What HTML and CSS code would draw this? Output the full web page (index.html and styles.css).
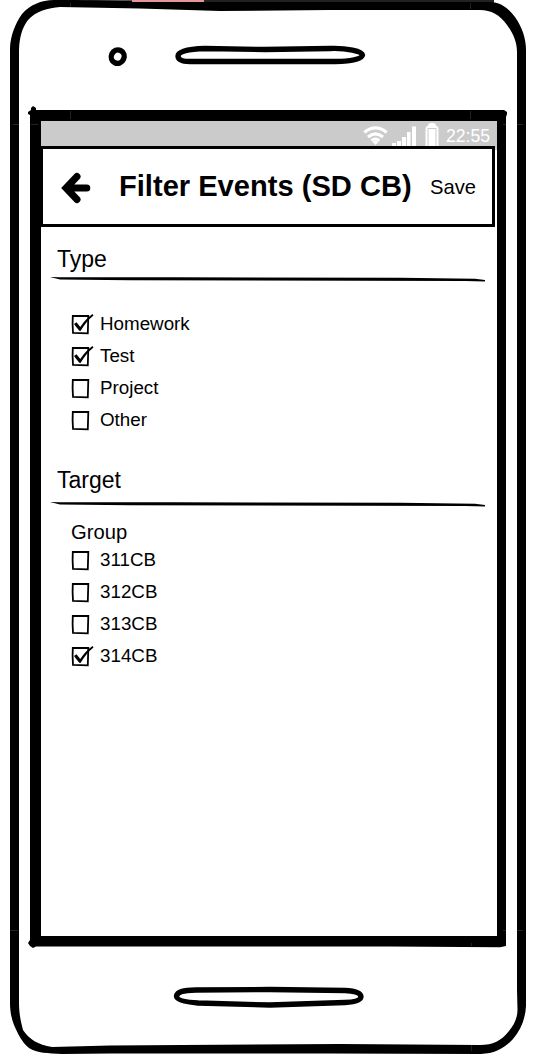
FILE: index.html
```html
<!DOCTYPE html>
<html lang="en">
<head>
<meta charset="utf-8">
<title>Filter Events</title>
<link rel="stylesheet" href="styles.css">
</head>
<body>
<div class="phone">
  <svg class="phone-frame" viewBox="0 0 535 1063" aria-hidden="true">
    <path fill="#222" d="M204 0H494V3H204z"/>
    <path fill="#555" d="M75 0H132V2H75z"/>
    <path fill-rule="evenodd" d="M10 48C10.500 36 15 24 22 14C30 5 41 0 54 0H75C120 1 180 2 220 2H490C501 2 509 9 515 17C522 27 526 38 526 50V1006C525.500 1018 521 1030 513 1039C505 1048 495 1053.700 481 1054L330 1053.500L110 1053.500L62 1054C48 1053 37 1053.500 29 1048C22 1043 17 1032 14 1025C11 1017 10 1010 10 1003zM19 50V1003C19 1014 21 1022 23 1030C29 1039 38 1045 52 1047L110 1045.500L340 1044L480 1045C493 1045 501 1041 509 1031C514 1025 517.500 1018 517.500 1010L517 990V52C517 42 513 33 507 25C500 15 491 10 480 10H330L220 11L140 8.500L60 7C48 8 36 11 28 20C22 28 19.500 37 19 50z"/>
    <path fill="#e5969a" d="M132 0H204V2H132z"/>
    <path fill-rule="evenodd" d="M30 115L28 114V112L31 110V108L33 106L36 108V110H504L507 112V114L506 117V946L500 947.300L390 946.500H36L33 948L30 946L28 943L30 940zM41 121V936H497V121z"/>
    <ellipse cx="117.700" cy="56.600" rx="6.400" ry="6.800" transform="rotate(25 117.700 56.600)" fill="none" stroke="#000" stroke-width="5.400"/>
    <path d="M178 56C178 51 189 49 205 48.500L265 49.500L330 48.500C347 48 362 51 362.500 55C362 59 350 61.500 335 61.500H190C181 61.500 178 59 178 56z" fill="none" stroke="#000" stroke-width="5.300"/>
    <path d="M176.500 996.500C177 991 184 990.500 196 990L270 989.500L345 990.500C356 991 360.500 993 361 996.500C361 1000 356 1002 345 1002.500L270 1005L198 1003C184 1002 177 1000 176.500 996.500z" fill="none" stroke="#000" stroke-width="5.300"/>
    <path d="M70.500 3V7M70.500 111V119M470.500 3V9M470.500 111V119M13 124.500H19M31 124.500H38M503 124.500H506M517 124.500H523M10 930.500H18M503 930.500H506M517 930.500H523M471.500 943V946M471.500 1045V1051" fill="none" stroke="#444" stroke-width=".5"/>
  </svg>
  <main class="screen">
    <div class="status-bar">
      <svg class="status-icons" viewBox="0 0 78 26" aria-hidden="true">
        <g fill="none" stroke="#fff" stroke-width="3.200">
          <path d="M1.300 11.500Q12.500 2.300 23.700 11.500"/>
          <path d="M5 15.900Q12.500 9.700 20 15.900"/>
          <path d="M8.500 19.600Q12.500 16.400 16.500 19.600" stroke-width="2.800"/>
        </g>
        <path fill="#fff" d="M9.500 21Q12.500 18.500 15.500 21L12.500 24zM29 22H33V26H29zM34 20H38V26H34zM39 16H43V26H39zM44 11H47.500V26H44zM49 5.500H53V26H49z"/>
        <path fill="#fff" fill-rule="evenodd" d="M65 5Q65 2 68 2H70Q73 2 73 5Q75.500 5 75.500 8V26H62.500V8Q62.500 5 65 5zM64.500 8V26H73.500V8Q73.500 7 72.500 7H65.500Q64.500 7 64.500 8zM65.500 8H72.500V26H65.500z"/>
      </svg>
      <span class="clock">22:55</span>
    </div>
    <header class="app-bar">
      <svg class="back-arrow" viewBox="0 0 32 34" aria-hidden="true">
        <path d="M16 6.500L5 18L16 29.500M6 18H25.800" fill="none" stroke="#000" stroke-width="7" stroke-linecap="round" stroke-linejoin="miter"/>
      </svg>
      <h1 class="title">Filter Events (SD CB)</h1>
      <span class="save">Save</span>
    </header>
    <section class="section section-type">
      <h2 class="section-title">Type</h2>
      <svg class="rule" viewBox="0 0 436 6"><path d="M0 1L10 1.200L125 1.200L350 1.800L425 2.700L435 4V5.500L415 5L80 4.200L10 3.600z"/></svg>
      <ul class="options">
        <li class="option"><svg class="check" viewBox="0 0 24 24"><use href="#box"/><use href="#tick"/></svg><span>Homework</span></li>
        <li class="option"><svg class="check" viewBox="0 0 24 24"><use href="#box"/><use href="#tick"/></svg><span>Test</span></li>
        <li class="option"><svg class="check" viewBox="0 0 24 24"><use href="#box"/></svg><span>Project</span></li>
        <li class="option"><svg class="check" viewBox="0 0 24 24"><use href="#box"/></svg><span>Other</span></li>
      </ul>
    </section>
    <section class="section section-target">
      <h2 class="section-title">Target</h2>
      <svg class="rule" viewBox="0 0 436 6"><path d="M0 1L10 1.200L125 1.200L350 1.800L425 2.700L435 4V5.500L415 5L80 4.200L10 3.600z"/></svg>
      <h3 class="group-title">Group</h3>
      <ul class="options">
        <li class="option"><svg class="check" viewBox="0 0 24 24"><use href="#box"/></svg><span>311CB</span></li>
        <li class="option"><svg class="check" viewBox="0 0 24 24"><use href="#box"/></svg><span>312CB</span></li>
        <li class="option"><svg class="check" viewBox="0 0 24 24"><use href="#box"/></svg><span>313CB</span></li>
        <li class="option"><svg class="check" viewBox="0 0 24 24"><use href="#box"/><use href="#tick"/></svg><span>314CB</span></li>
      </ul>
    </section>
  </main>
</div>
<svg class="symbols" aria-hidden="true">
  <defs>
    <path id="box" d="M1.800 3.800L17.300 4L16.800 21.300L2 20.800L1.600 12z" fill="none" stroke="#000" stroke-width="1.800"/>
    <path id="tick" d="M3 12L5.500 10.200L9.300 15Q14 7.500 21.500 2L22.500 3.500Q15 9.500 9.500 19L8.300 18.700Q5.500 15.500 3 12z"/>
  </defs>
</svg>
</body>
</html>
```

FILE: styles.css
```css
* { box-sizing: border-box; }

body {
  margin: 0;
  background: #fff;
  color: #000;
  font-family: "Liberation Sans", Arial, sans-serif;
}

h1, h2, h3, ul { margin: 0; padding: 0; font-weight: normal; }
ul { list-style: none; }
svg { display: block; flex: none; }

.phone {
  position: relative;
  width: 535px;
  height: 1063px;
  padding: 121px 38px 0 41px;
  overflow: hidden;
}

.phone-frame {
  position: absolute;
  inset: 0;
  width: 535px;
  height: 1063px;
}

.screen {
  position: relative;
  width: 456px;
  height: 815px;
}

.status-bar {
  display: flex;
  justify-content: flex-end;
  height: 29px;
  padding-right: 6px;
  background: #cbcbcb;
  color: #fff;
}

.status-icons { width: 78px; height: 26px; }

.clock {
  width: 50px;
  padding-left: 5px;
  font-size: 17.6px;
  line-height: 31px;
}

.app-bar {
  display: flex;
  align-items: center;
  width: 455px;
  height: 81px;
  margin: -4px 0 0 -1px;
  padding: 0 0 0 18px;
  position: relative;
  border: 3px solid #000;
  background: #fff;
}

.back-arrow { width: 32px; height: 34px; }

.title {
  width: 311px;
  margin-left: 26px;
  padding-bottom: 2px;
  font-size: 29.1px;
  font-weight: bold;
  line-height: 36px;
  white-space: nowrap;
}

.save { padding-top: 1px; font-size: 20.2px; line-height: 24px; }

.section-type { padding-top: 17px; }
.section-target { padding-top: 29px; }

.section-title {
  height: 32px;
  padding-left: 16px;
  font-size: 23px;
  line-height: 30px;
}

.section-target .section-title { height: 36px; }

.rule { width: 436px; height: 6px; margin-left: 9px; }

.section-type .options { padding-top: 26px; }

.options { padding-left: 30px; }

.option {
  display: flex;
  align-items: center;
  gap: 5px;
  height: 32px;
  font-size: 18.8px;
  line-height: 22px;
}

.check { width: 24px; height: 24px; }

.group-title {
  padding: 13px 0 0 30px;
  font-size: 20.2px;
  line-height: 24px;
}

.symbols { position: absolute; width: 0; height: 0; }
```
